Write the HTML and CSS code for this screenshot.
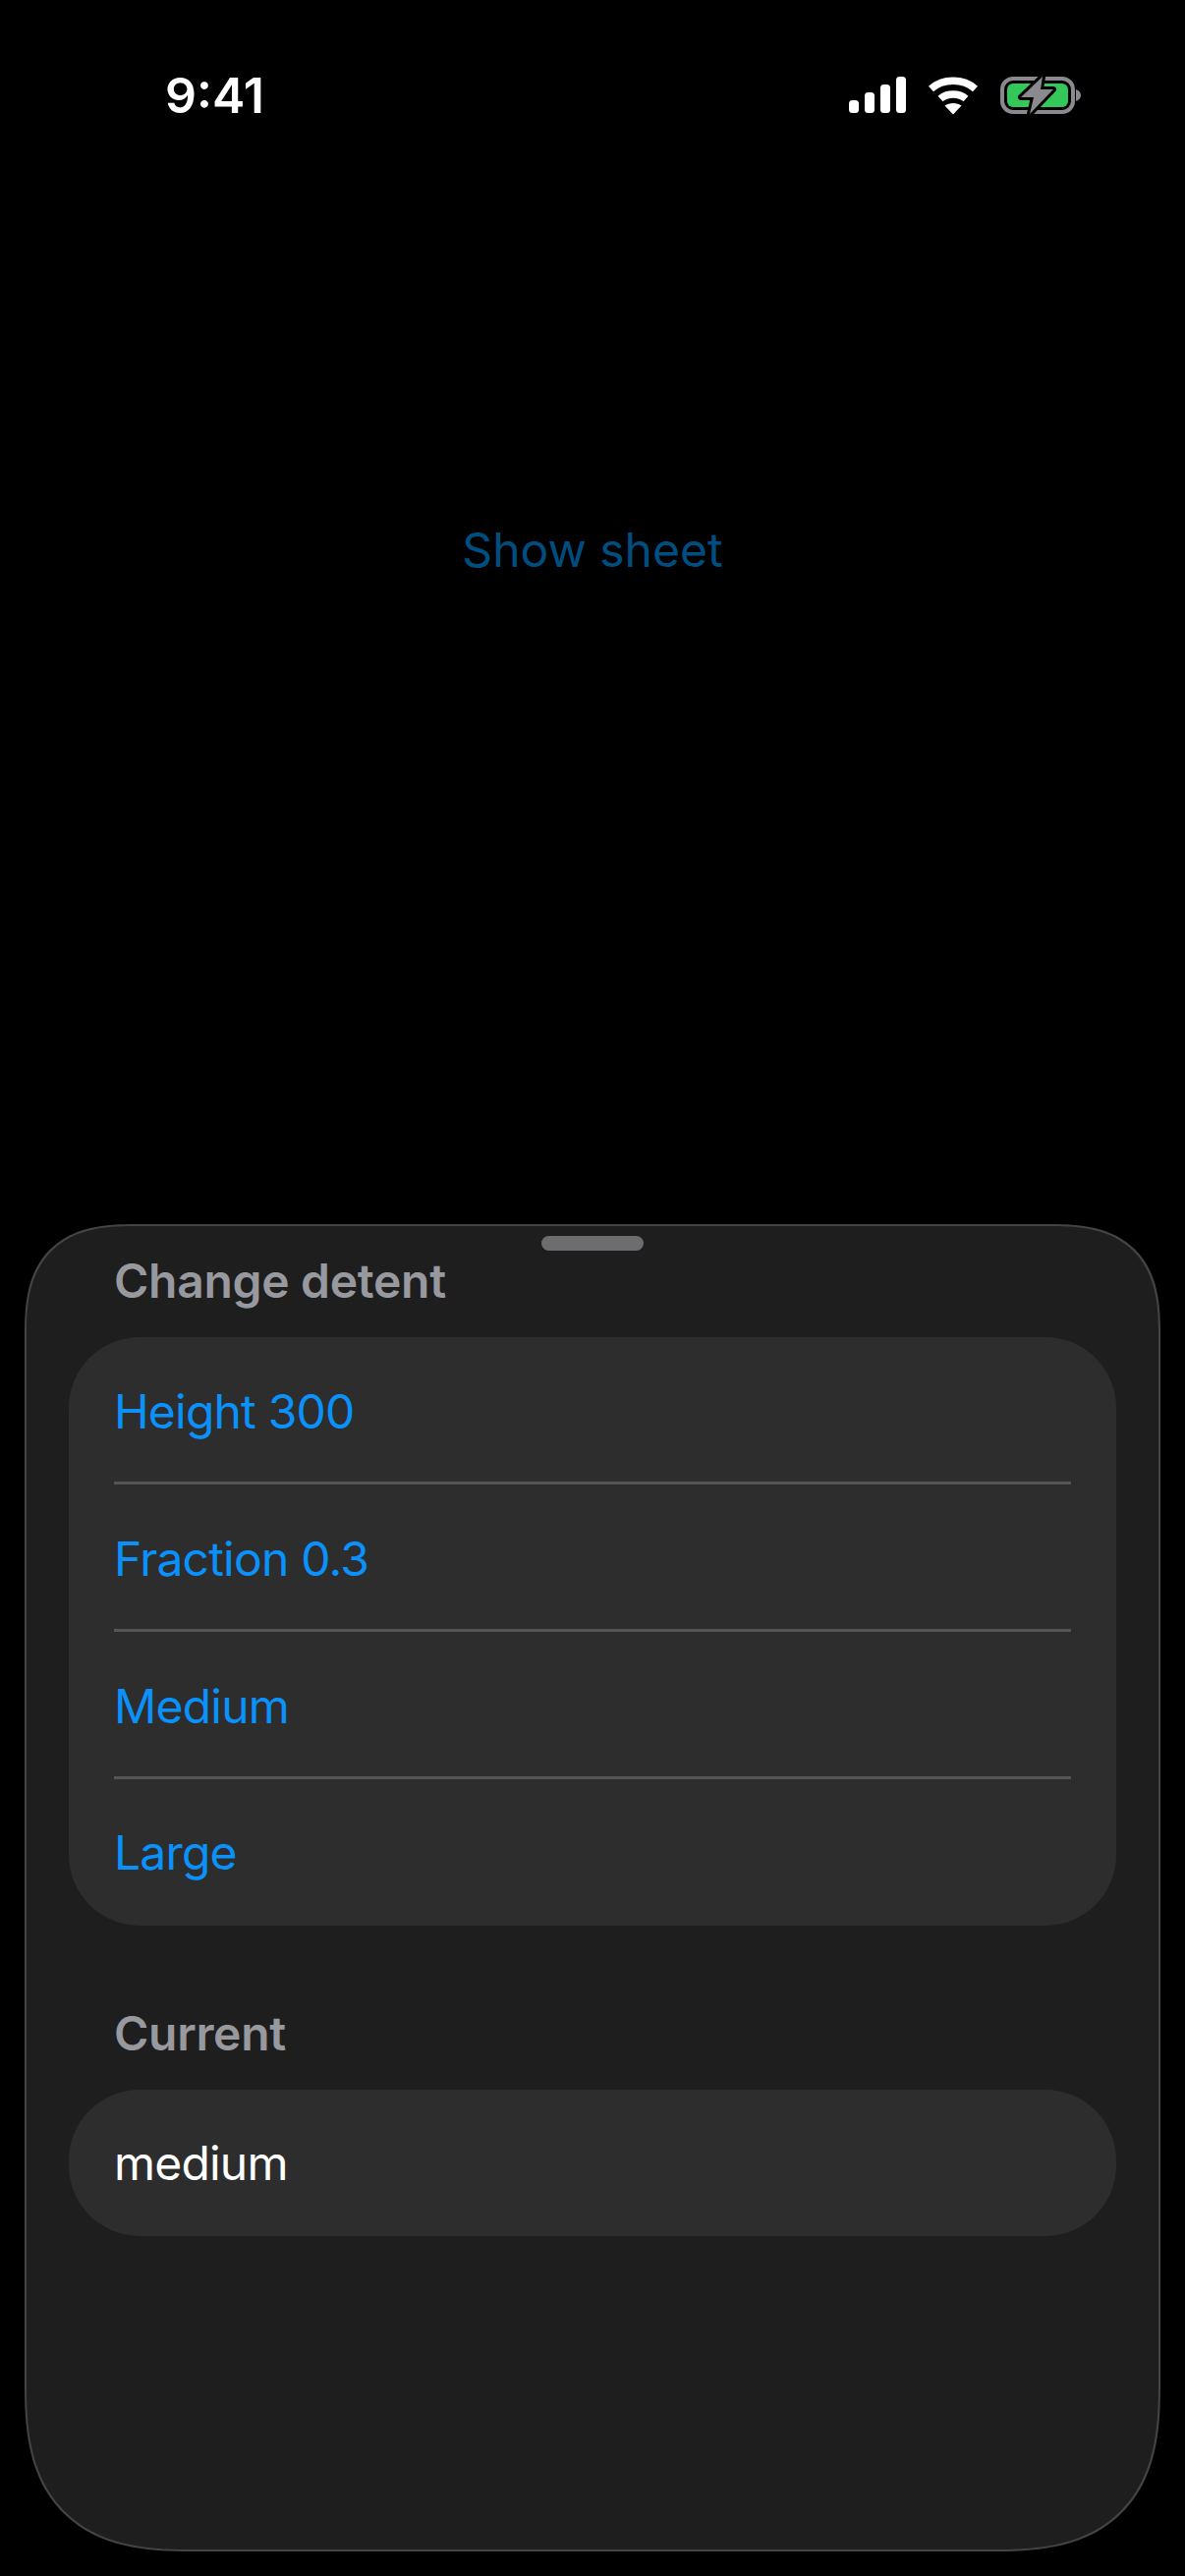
FILE: index.html

```html
<!DOCTYPE html>
<html>
<head>
  <meta charset="UTF-8">
  <title>Change detent</title>
  <link rel="stylesheet" href="styles.css">
</head>
<body>
  <div class="screen">

    <div class="status-bar">
      <span class="time">9:41</span>
      <div class="status-icons">
        <svg class="icon-signal" width="58" height="38" viewBox="0 0 58 38">
          <rect x="0" y="24" width="10" height="13" rx="3.5" fill="#fff"/>
          <rect x="16" y="16" width="10" height="21" rx="3.5" fill="#fff"/>
          <rect x="32" y="8" width="10" height="29" rx="3.5" fill="#fff"/>
          <rect x="48" y="0" width="10" height="37" rx="3.5" fill="#fff"/>
        </svg>
        <svg class="icon-wifi" width="52" height="39" viewBox="0 0 52 39">
          <path d="M3.5 12.5C15.500 1.500 36.500 1.500 48.500 12.500" fill="none" stroke="#fff" stroke-width="7.500"/>
          <path d="M13 22.500C20 16.500 32 16.500 39 22.500" fill="none" stroke="#fff" stroke-width="7.500"/>
          <path d="M17.500 29.500C22 26 30 26 34.500 29.500L26 38.500Z" fill="#fff"/>
        </svg>
        <svg class="icon-battery" width="83" height="40" viewBox="0 0 83 40">
          <rect x="2" y="3" width="72" height="34" rx="11" fill="none" stroke="#8a8a8e" stroke-width="4"/>
          <rect x="7" y="8" width="62" height="24" rx="6" fill="#34c759"/>
          <path d="M77 14C80 15 82 17 82 20C82 23 80 25 77 26Z" fill="#8a8a8e"/>
          <path d="M43 1L21 22H34L30 39L54 14H41Z" fill="#8a8a8e" stroke="#000" stroke-width="6" stroke-linejoin="round" paint-order="stroke"/>
        </svg>
      </div>
    </div>

    <div class="show-sheet">Show sheet</div>

    <div class="sheet">
      <div class="grabber"></div>
      <div class="section-label">Change detent</div>
      <div class="card">
        <div class="row row-link">Height 300</div>
        <div class="row row-link">Fraction 0.3</div>
        <div class="row row-link">Medium</div>
        <div class="row row-link">Large</div>
      </div>
      <div class="section-label section-label-second">Current</div>
      <div class="card">
        <div class="row">medium</div>
      </div>
    </div>

  </div>
</body>
</html>
```

FILE: styles.css

```css
html, body {
  margin: 0;
  background: #000;
}

.screen {
  width: 1206px;
  height: 2622px;
  display: flex;
  flex-direction: column;
  font-family: Inter, "Liberation Sans", sans-serif;
  overflow: hidden;
}

.status-bar {
  display: flex;
  justify-content: space-between;
  align-items: center;
  height: 38px;
  padding: 78px 105px 0 168px;
}

.time {
  color: #fff;
  font-size: 50px;
  font-weight: 600;
}

.status-icons {
  display: flex;
  align-items: center;
  gap: 22px;
}

.show-sheet {
  margin-top: 414px;
  text-align: center;
  color: #004d80;
  font-size: 48px;
  line-height: 60px;
}

.sheet {
  margin: auto 25px 25px;
  height: 1351px;
  box-sizing: border-box;
  padding: 10px 43px 0;
  background: #1e1e1e;
  border: 2px solid #444;
  border-radius: 112px 112px 170px 170px;
  corner-shape: superellipse(1.4);
}

.grabber {
  width: 104px;
  height: 15px;
  margin: 0 auto;
  background: #6d6d70;
  border-radius: 8px;
}

.section-label {
  margin: 1px 0 0 46px;
  height: 87px;
  color: #98989f;
  font-size: 48px;
  font-weight: 600;
  line-height: 60px;
  letter-spacing: -0.3px;
}

.section-label-second {
  margin-top: 80px;
  height: 87px;
}

.card {
  background: #2d2d2d;
  border-radius: 72px;
  padding-left: 46px;
}

.row {
  height: 149px;
  display: flex;
  align-items: center;
  color: #fff;
  font-size: 48px;
  letter-spacing: -0.8px;
}

.row-link {
  color: #0a91fa;
  margin-right: 46px;
  box-shadow: inset 0 -3px 0 #545454;
  height: 150px;
}

.row-link:last-child {
  box-shadow: none;
  height: 149px;
}
```
